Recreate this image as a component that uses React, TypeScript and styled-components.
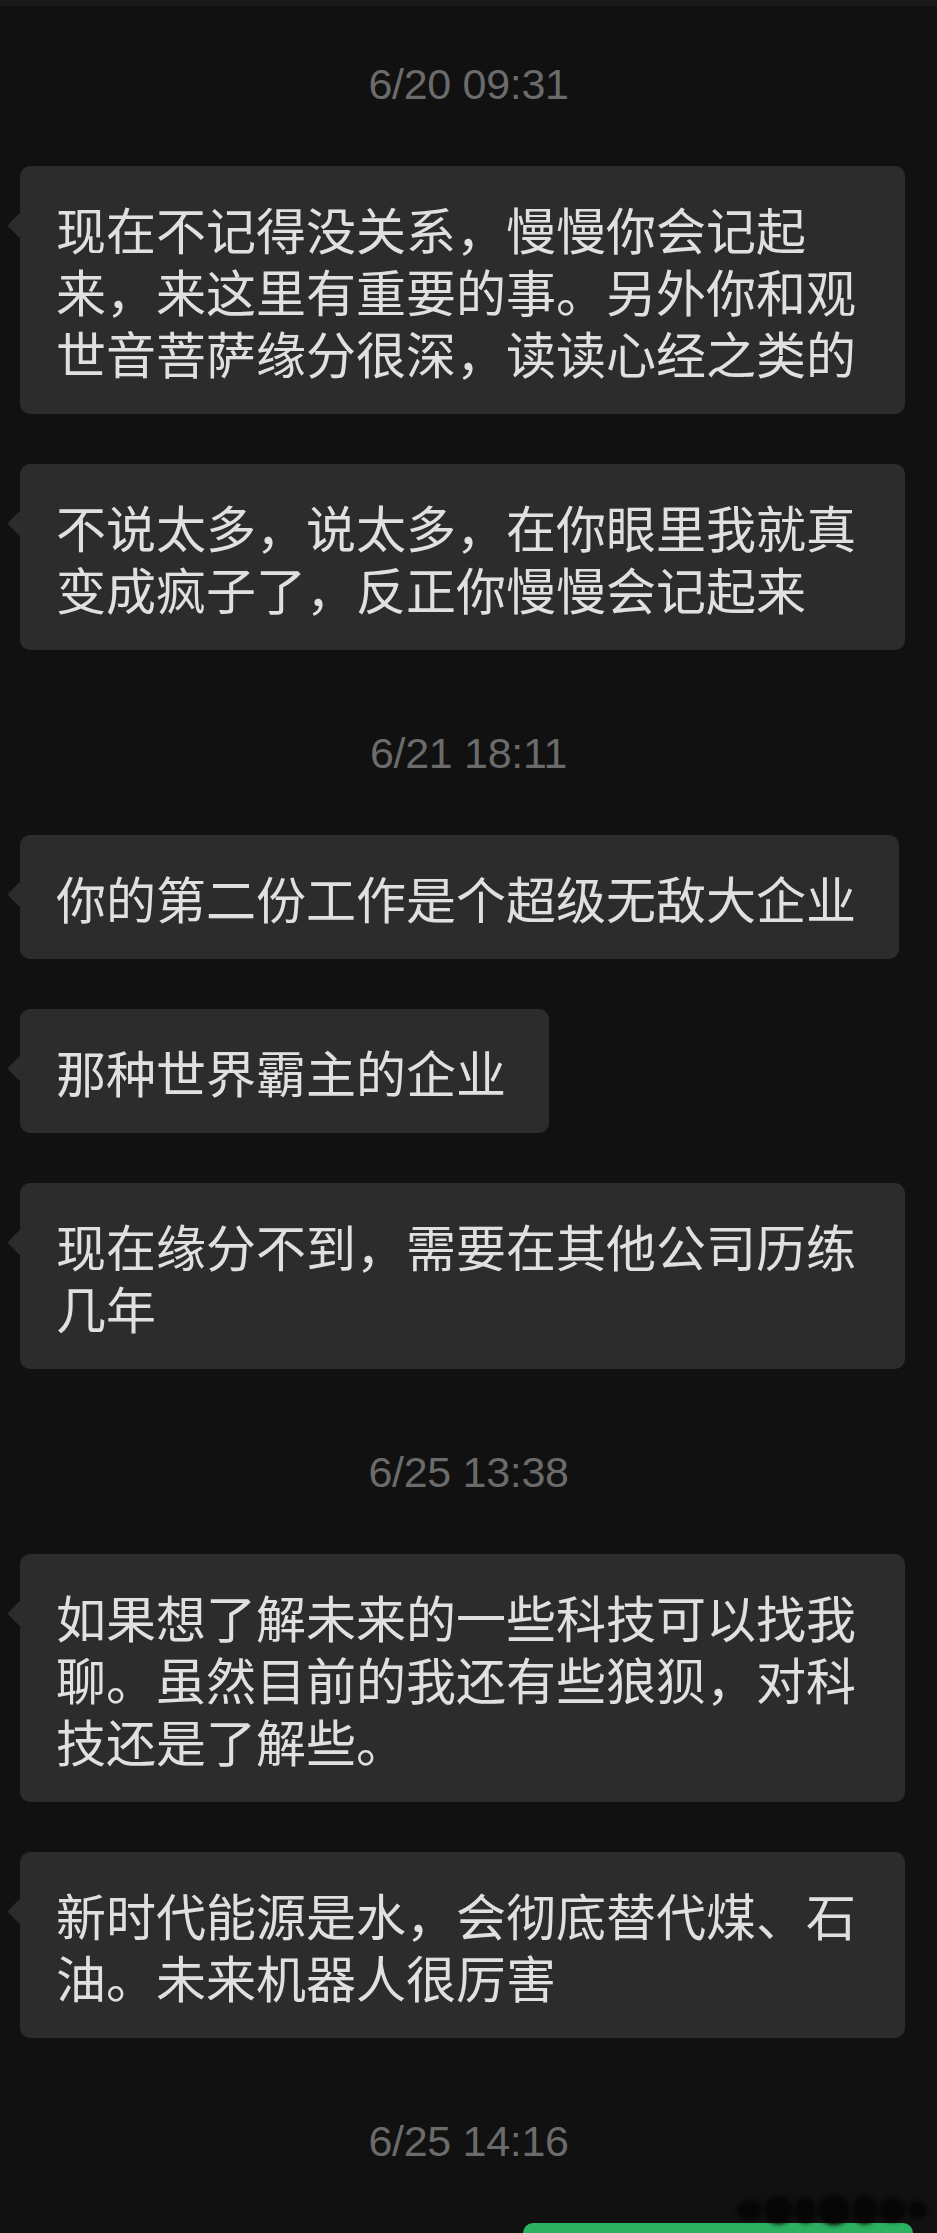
import styled, { createGlobalStyle } from 'styled-components';

const GlobalStyle = createGlobalStyle`
  html, body {
    margin: 0;
    padding: 0;
    background: #111111;
  }
`;

type Item =
  | { kind: 'time'; text: string }
  | { kind: 'in'; text: string }
  | { kind: 'out'; text: string };

const messages: Item[] = [
  { kind: 'time', text: '6/20 09:31' },
  {
    kind: 'in',
    text: '现在不记得没关系，慢慢你会记起来，来这里有重要的事。另外你和观世音菩萨缘分很深，读读心经之类的',
  },
  { kind: 'in', text: '不说太多，说太多，在你眼里我就真变成疯子了，反正你慢慢会记起来' },
  { kind: 'time', text: '6/21 18:11' },
  { kind: 'in', text: '你的第二份工作是个超级无敌大企业' },
  { kind: 'in', text: '那种世界霸主的企业' },
  { kind: 'in', text: '现在缘分不到，需要在其他公司历练几年' },
  { kind: 'time', text: '6/25 13:38' },
  {
    kind: 'in',
    text: '如果想了解未来的一些科技可以找我聊。虽然目前的我还有些狼狈，对科技还是了解些。',
  },
  { kind: 'in', text: '新时代能源是水，会彻底替代煤、石油。未来机器人很厉害' },
  { kind: 'time', text: '6/25 14:16' },
  { kind: 'out', text: '' },
];

const Page = styled.div`
  min-height: 2233px;
  background: #111111;
  border-top: 6px solid #1a1a1a;
  padding-top: 25px;
  display: flex;
  flex-direction: column;
  overflow: hidden;
  box-sizing: border-box;
`;

const TimeStamp = styled.div`
  height: 50px;
  line-height: 50px;
  margin: 28px 0 57px;
  text-align: center;
  font-family: 'Liberation Sans', Arial, sans-serif;
  font-size: 43px;
  letter-spacing: -0.3px;
  color: #6b6b6b;
`;

const Row = styled.div<{ $out?: boolean }>`
  display: flex;
  justify-content: ${(p) => (p.$out ? 'flex-end' : 'flex-start')};
  padding: ${(p) => (p.$out ? '0 24px 0 0' : '0 0 0 20px')};
  margin-bottom: 50px;
`;

const Bubble = styled.div<{ $out?: boolean }>`
  position: relative;
  box-sizing: border-box;
  max-width: 885px;
  min-height: 124px;
  width: ${(p) => (p.$out ? '390px' : 'auto')};
  padding: 31px 43px 31px 36px;
  border-radius: 10px;
  background: ${(p) => (p.$out ? '#2bb160' : '#2c2c2c')};
  color: ${(p) => (p.$out ? '#111111' : '#e0e0e0')};
  font-family: 'Noto Sans CJK SC', 'Noto Sans', sans-serif;
  font-size: 50px;
  line-height: 62px;
  word-break: break-all;

  &::before {
    content: '';
    position: absolute;
    top: 50px;
    ${(p) => (p.$out ? 'right: -9px;' : 'left: -9px;')}
    width: 19px;
    height: 19px;
    border-radius: 3px;
    background: inherit;
    transform: rotate(45deg);
  }
`;

const Smudge = styled.div`
  position: absolute;
  top: -30px;
  right: -14px;
  width: 190px;
  height: 34px;
  display: flex;
  align-items: center;
  gap: 2px;
  filter: blur(2px);
`;

const SmudgeDot = styled.span<{ $w: number; $h: number }>`
  width: ${(p) => p.$w}px;
  height: ${(p) => p.$h}px;
  border-radius: 50%;
  background: #060606;
`;

const smudge = [
  [26, 20],
  [30, 28],
  [22, 26],
  [34, 30],
  [26, 28],
  [28, 24],
  [20, 18],
];

export default function App() {
  return (
    <>
      <GlobalStyle />
      <Page>
        {messages.map((m, i) => {
          if (m.kind === 'time') return <TimeStamp key={i}>{m.text}</TimeStamp>;
          const out = m.kind === 'out';
          return (
            <Row key={i} $out={out}>
              <Bubble $out={out}>
                {m.text}
                {out && (
                  <Smudge>
                    {smudge.map(([w, h], j) => (
                      <SmudgeDot key={j} $w={w} $h={h} />
                    ))}
                  </Smudge>
                )}
              </Bubble>
            </Row>
          );
        })}
      </Page>
    </>
  );
}
